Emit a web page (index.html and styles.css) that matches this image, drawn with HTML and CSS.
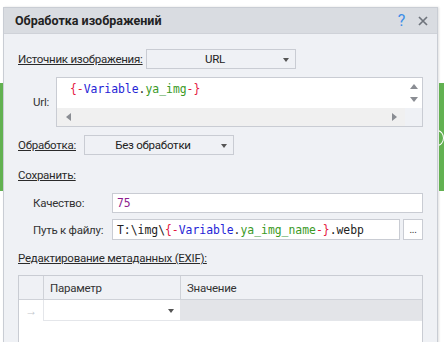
FILE: index.html
```html
<!DOCTYPE html>
<html lang="ru">
<head>
<meta charset="utf-8">
<link rel="stylesheet" href="styles.css">
</head>
<body>
<div class="page">
  <div class="side side-left"><div class="green"></div></div>
  <div class="dialog">
    <div class="titlebar">
      <span class="title">Обработка изображений</span>
      <span class="help">?</span>
      <svg class="close" width="10" height="10" viewBox="0 0 10 10"><path d="M1 1L9 9M9 1L1 9" stroke="#6f747c" stroke-width="1.7" fill="none"/></svg>
    </div>
    <div class="content">
      <div class="row row-source">
        <span class="lbl ul w-source">Источник изображения:</span>
        <div class="combo w150"><span class="combo-text">URL</span><span class="caret"></span></div>
      </div>
      <div class="row row-url">
        <span class="lbl w-url">Url:</span>
        <div class="textarea">
          <div class="ta-main">
            <div class="ta-text code"><span class="r">{-</span><span class="b">Variable</span><span class="d">.</span><span class="g">ya_img</span><span class="r">-}</span></div>
            <div class="vscroll"><span class="tri up"></span><span class="tri down"></span></div>
          </div>
          <div class="ta-bottom">
            <div class="hscroll"><span class="tri left"></span><span class="tri right"></span></div>
            <div class="corner"></div>
          </div>
        </div>
      </div>
      <div class="row row-proc">
        <span class="lbl ul w-proc">Обработка:</span>
        <div class="combo w150"><span class="combo-text">Без обработки</span><span class="caret"></span></div>
      </div>
      <div class="section ul">Сохранить:</div>
      <div class="row row-quality">
        <span class="lbl w-sub">Качество:</span>
        <div class="input code"><span class="p">75</span></div>
      </div>
      <div class="row row-path">
        <span class="lbl w-sub">Путь к файлу:</span>
        <div class="input code path">T:\img\<span class="r">{-</span><span class="b">Variable</span><span class="d">.</span><span class="g">ya_img_name</span><span class="r">-}</span>.webp</div>
        <div class="btn">...</div>
      </div>
      <div class="section ul exif">Редактирование метаданных (EXIF):</div>
      <div class="grid">
        <div class="gh ind"></div>
        <div class="gh param">Параметр</div>
        <div class="gh value">Значение</div>
        <div class="gc ind"><span class="arrow">→</span></div>
        <div class="gc param"><span class="caret"></span></div>
        <div class="gc value"></div>
        <div class="gfill"></div>
      </div>
    </div>
  </div>
  <div class="side side-right"><div class="green"><span class="ring"></span></div></div>
</div>
</body>
</html>
```
FILE: styles.css
```css
* { box-sizing: border-box; }
html, body { margin: 0; padding: 0; background: #fff; }
body {
  font-family: Roboto, "Noto Sans", sans-serif;
  font-size: 11.5px;
  letter-spacing: -0.25px;
  color: #333;
  width: 444px;
  height: 342px;
  overflow: hidden;
}
.page { display: flex; align-items: flex-start; }
.side { flex: none; }
.side-left { width: 3px; }
.side-right { width: 6px; padding-left: 1px; }
.green { background: #62b151; margin-top: 83px; height: 108px; overflow: hidden; position: relative; }
.side-left .green { width: 3px; }
.side-right .green { width: 5px; }
.ring {
  position: absolute; left: -9px; top: 47px;
  width: 14px; height: 16px;
  border: 1.5px solid #fff; border-radius: 50%;
}
.dialog {
  flex: none;
  width: 435px;
  height: 340px;
  margin-top: 7px;
  background: #eff1f5;
  border: 1px solid #c9cdd4;
  box-shadow: 1px 0 2px rgba(0,0,0,0.12);
  display: flex; flex-direction: column;
  overflow: hidden;
}
.titlebar {
  flex: none;
  height: 26px;
  background: #d9dce1;
  display: flex; align-items: center;
  padding-left: 11px;
  border-bottom: 1px solid #cfd2d8;
}
.title { font-weight: bold; font-size: 12.5px; letter-spacing: 0; color: #222; flex: 1; }
.help { color: #3d8ee8; font-size: 16px; margin-right: 13px; line-height: 1; }
.close { margin-right: 9px; }
.content { flex: none; padding: 15px 14px 0 14px; display: flex; flex-direction: column; }
.row { display: flex; align-items: center; }
.lbl { flex: none; white-space: nowrap; }
.ul { text-decoration: underline; color: #2a2a2a; }
.w-source { width: 128px; }
.w-proc { width: 66px; }
.w-url { width: 38px; text-align: right; padding-right: 7px; }
.w-sub { width: 94px; padding-left: 15px; }
.combo {
  height: 20px;
  border: 1px solid #c9ccd3;
  background: #eff1f5;
  display: flex; align-items: center;
  position: relative;
}
.w150 { width: 150px; }
.combo-text { flex: 1; text-align: center; color: #222; }
.caret {
  width: 0; height: 0;
  border-left: 3.5px solid transparent;
  border-right: 3.5px solid transparent;
  border-top: 4px solid #555;
  margin-right: 6px;
  margin-top: 2px;
}
.row-url { margin-top: 8px; }
.textarea {
  width: 367px; height: 50px;
  border: 1px solid #c9ccd3;
  background: #fff;
  display: flex; flex-direction: column;
}
.ta-main { flex: 1; display: flex; }
.ta-text { flex: 1; padding: 3px 0 0 13px; line-height: 16px; }
.vscroll { width: 17px; display: flex; flex-direction: column; align-items: center; padding-top: 6px; gap: 8px; }
.ta-bottom { height: 18px; display: flex; }
.hscroll { flex: 1; background: #f0f0f0; display: flex; align-items: center; justify-content: space-between; padding: 0 8px 0 9px; }
.corner { width: 17px; background: #eff1f5; }
.tri { width: 0; height: 0; }
.tri.up { border-left: 4px solid transparent; border-right: 4px solid transparent; border-bottom: 5px solid #8a8d93; }
.tri.down { border-left: 4px solid transparent; border-right: 4px solid transparent; border-top: 5px solid #8a8d93; }
.tri.left { border-top: 4px solid transparent; border-bottom: 4px solid transparent; border-right: 5px solid #8a8d93; }
.tri.right { border-top: 4px solid transparent; border-bottom: 4px solid transparent; border-left: 5px solid #8a8d93; }
.code { font-family: "DejaVu Sans Mono", "Liberation Mono", monospace; font-size: 11.4px; letter-spacing: 0; color: #222; }
.r { color: #e5173f; }
.b { color: #2424d6; }
.g { color: #3b9a1f; }
.d { color: #333; }
.p { color: #8e1d8e; }
.row-proc { margin-top: 8px; }
.section { margin-top: 12px; line-height: 16px; align-self: flex-start; }
.row-quality { margin-top: 10px; }
.input {
  height: 20px;
  flex: 1;
  background: #fff;
  border: 1px solid #c9ccd3;
  display: flex; align-items: center;
  padding-left: 4px;
  white-space: nowrap;
}
.row-path { margin-top: 6px; }
.row-path .input { height: 21px; flex: none; width: 288px; }
.btn {
  margin-left: 3px;
  width: 20px; height: 21px;
  background: #fff;
  border: 1px solid #c9ccd3;
  display: flex; align-items: center; justify-content: center;
  font-size: 10px; color: #333;
  line-height: 1;
}
.exif { margin-top: 10px; }
.grid {
  margin-top: 9px;
  border: 1px solid #c9ccd3;
  background: #fff;
  display: grid;
  grid-template-columns: 24px 137px 1fr;
  grid-template-rows: 24px 21px 30px;
}
.gh { background: #eff1f5; border-bottom: 1px solid #cfd2d8; display: flex; align-items: center; padding-left: 6px; color: #333; }
.gh.param, .gh.value { border-left: 1px solid #cfd2d8; }
.gc { display: flex; align-items: center; }
.gc.ind { background: #fff; justify-content: center; }
.arrow { color: #c4c7cc; font-size: 12px; }
.gc.param { background: #fff; border-left: 1px solid #e4e6ea; border-bottom: 1px solid #e4e6ea; justify-content: flex-end; }
.gc.param .caret { margin-right: 6px; }
.gc.value { background: #e3e4e8; border-bottom: 1px solid #e4e6ea; }
.gfill { grid-column: 1 / 4; background: #fff; }
```
